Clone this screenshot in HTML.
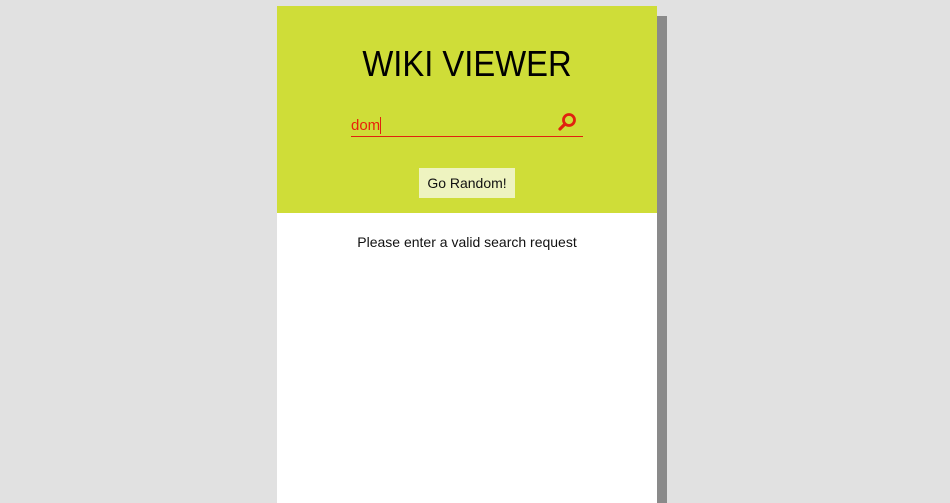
<!DOCTYPE html>
<html><head><style>
html,body{margin:0;width:950px;height:503px;overflow:hidden}
body{background:#e1e1e1;font-family:"Liberation Sans",sans-serif;position:relative}
.shadow{position:absolute;left:287px;top:16px;width:380px;height:487px;background:#8a8a8a}
.card{position:absolute;left:277px;top:6px;width:380px;height:497px;background:#fff}
.head{height:207px;background:#cfdd38;position:relative}
h1{margin:0;position:absolute;top:37px;width:100%;text-align:center;font-weight:normal;font-size:36px;color:#000;transform:scaleX(0.91)}
.inp{position:absolute;left:74px;top:110px;width:232px;height:20px;border-bottom:1.5px solid #e0220f;color:#e8220a;font-size:15px}
.inp span{border-right:1px solid #e0220f;position:relative;top:1px}
.btn{position:absolute;left:142px;top:162px;width:96px;height:30px;background:#eef3c0;font-size:14px;line-height:30px;text-align:center;color:#111}
.msg{text-align:center;margin-top:21px;font-size:14px;color:#111}
</style></head><body>
<div class="shadow"></div>
<div class="card">
<div class="head">
<h1>WIKI VIEWER</h1>
<div class="inp"><span>dom</span>
<svg style="position:absolute;right:5px;top:-5px" width="22" height="22" viewBox="0 0 22 22"><circle cx="13" cy="9" r="5.5" fill="none" stroke="#e0220f" stroke-width="2.8"/><line x1="9" y1="13" x2="4" y2="18" stroke="#e0220f" stroke-width="3.2" stroke-linecap="round"/></svg>
</div>
<div class="btn">Go Random!</div>
</div>
<div class="msg">Please enter a valid search request</div>
</div>
</body></html>
